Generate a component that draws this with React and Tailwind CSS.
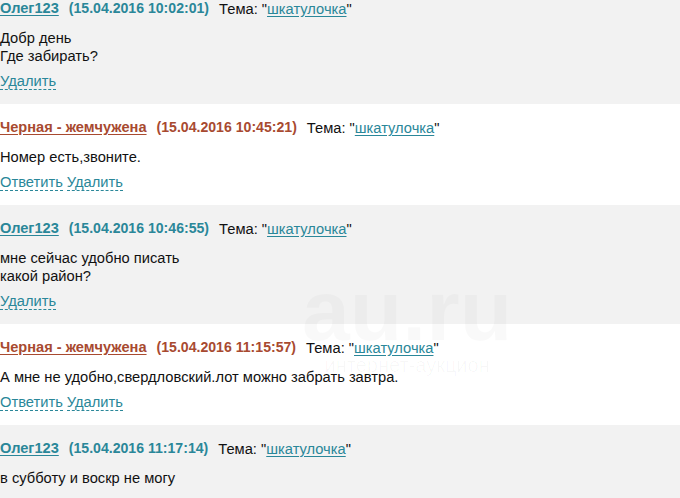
const messages = [
  { author: "Олег123", seller: false, date: "15.04.2016 10:02:01", body: ["Добр день", "Где забирать?"], reply: false },
  { author: "Черная - жемчужена", seller: true, date: "15.04.2016 10:45:21", body: ["Номер есть,звоните."], reply: true },
  { author: "Олег123", seller: false, date: "15.04.2016 10:46:55", body: ["мне сейчас удобно писать", "какой район?"], reply: false },
  { author: "Черная - жемчужена", seller: true, date: "15.04.2016 11:15:57", body: ["А мне не удобно,свердловский.лот можно забрать завтра."], reply: true },
  { author: "Олег123", seller: false, date: "15.04.2016 11:17:14", body: ["в субботу и воскр не могу"], reply: false },
];

export default function App() {
  return (
    <div className="relative w-[680px] h-[498px] overflow-hidden bg-white text-[14.7px] text-[#111] font-['Liberation_Sans',Arial,sans-serif]">
      <div className="-mt-[15px]">
        {messages.map((m, i) => (
          <Message key={i} m={m} gray={!m.seller} />
        ))}
      </div>
      <div className="absolute left-[302px] top-[272px] pointer-events-none select-none text-center">
        <div className="text-[86px] leading-[76px] font-bold text-black/[0.025]">au.ru</div>
        <div className="text-[20px] leading-[22px] text-black/[0.03] mt-[6px]">интернет-аукцион</div>
      </div>
    </div>
  );
}

function Message({ m, gray }) {
  const tone = m.seller ? "text-[#a84a30] decoration-[#a84a30]" : "text-[#2a8799] decoration-[#2a8799]";
  return (
    <div className={`${gray ? "bg-[#f2f2f2]" : "bg-white"} pt-[16px] pb-[14px]`}>
      <div className="h-[16px] flex items-center whitespace-nowrap">
        <span className={`font-bold text-[14.6px] underline underline-offset-2 ${tone}`}>{m.author}</span>
        <span className={`font-bold text-[14.1px] ml-[10px] ${tone}`}>({m.date})</span>
        <span className="ml-[10px]">Тема: "<span className="text-[#2a8799] underline underline-offset-2">шкатулочка</span>"</span>
      </div>
      <div className="mt-[12px] leading-[18px]">
        {m.body.map((l, i) => (
          <div key={i}>{l}</div>
        ))}
      </div>
      <div className="mt-[8px] h-[17px] leading-[17px] flex gap-[4px] text-[#2a8799]">
        {m.reply && <span className="border-b border-dashed border-[#2a8799]">Ответить</span>}
        <span className="border-b border-dashed border-[#2a8799]">Удалить</span>
      </div>
    </div>
  );
}
